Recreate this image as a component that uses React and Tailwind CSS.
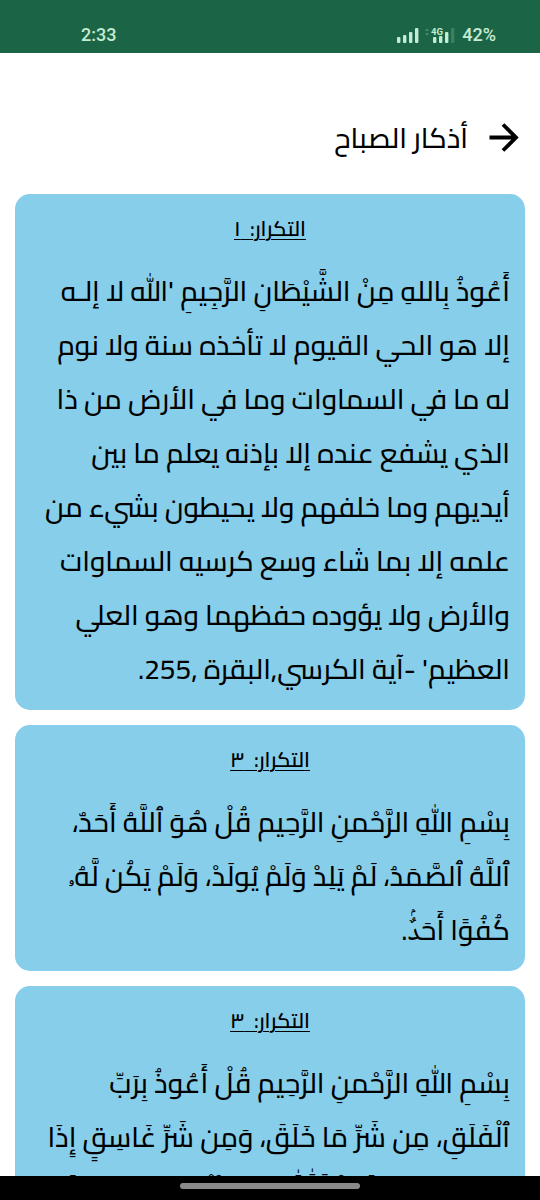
const adhkar = [
  {
    count: "١",
    text: "أَعُوذُ بِاللهِ مِنْ الشَّيْطَانِ الرَّجِيمِ 'الله لا إلـه إلا هو الحي القيوم لا تأخذه سنة ولا نوم له ما في السماوات وما في الأرض من ذا الذي يشفع عنده إلا بإذنه يعلم ما بين أيديهم وما خلفهم ولا يحيطون بشيء من علمه إلا بما شاء وسع كرسيه السماوات والأرض ولا يؤوده حفظهما وهو العلي العظيم' -آية الكرسي,البقرة ,255.",
  },
  {
    count: "٣",
    text: "بِسْمِ اللهِ الرَّحْمنِ الرَّحِيم قُلْ هُوَ ٱللَّهُ أَحَدٌ، ٱللَّهُ ٱلصَّمَدُ، لَمْ يَلِدْ وَلَمْ يُولَدْ، وَلَمْ يَكُن لَّهُۥ كُفُوًا أَحَدٌۢ.",
  },
  {
    count: "٣",
    text: "بِسْمِ اللهِ الرَّحْمنِ الرَّحِيم قُلْ أَعُوذُ بِرَبِّ ٱلْفَلَقِ، مِن شَرِّ مَا خَلَقَ، وَمِن شَرِّ غَاسِقٍ إِذَا وَقَبَ، وَمِن شَرِّ ٱلنَّفَّٰثَٰتِ فِى ٱلْعُقَدِ، وَمِن شَرِّ حَاسِدٍ إِذَا حَسَدَ.",
  },
];

function StatusBar() {
  return (
    <div
      dir="ltr"
      className="flex h-[53px] shrink-0 items-end justify-between bg-[#1c6446] pr-11 pb-2 pl-[81px] font-['Roboto',sans-serif] text-[18px] leading-5 text-[#c4ecd2]"
    >
      <span>2:33</span>
      <div className="flex items-center gap-1.5">
        <svg width="60" height="20" viewBox="0 0 60 20" fill="currentColor" aria-label="4G">
          <rect x="1" y="12" width="3.4" height="6" rx="1" />
          <rect x="7" y="10" width="3.4" height="8" rx="1" />
          <rect x="13" y="7" width="3.4" height="11" rx="1" />
          <rect x="19" y="3" width="3.4" height="15" rx="1" />
          <path d="M29 6l2-3 2 3zM29 8l2 3 2-3z" opacity="0.25" />
          <text x="35" y="9.5" fontSize="9.5" fontWeight="700">4G</text>
          <rect x="37" y="12" width="3.4" height="6" rx="1" />
          <rect x="43" y="11" width="3.4" height="7" rx="1" />
          <rect x="49" y="7" width="3.4" height="11" rx="1" />
          <rect x="55" y="3" width="3.4" height="15" rx="1" opacity="0.2" />
        </svg>
        <span>42%</span>
      </div>
    </div>
  );
}

function DhikrCard({ count, text }) {
  return (
    <article className="rounded-[15px] bg-[#87ceeb] px-[15px] pt-[14px] pb-[14px]">
      <h2 className="mb-[15px] text-center text-[21px] leading-[41px] font-semibold whitespace-pre underline decoration-1 underline-offset-3">
        {"التكرار:  " + count}
      </h2>
      <p>{text}</p>
    </article>
  );
}

export default function App() {
  return (
    <div
      dir="rtl"
      lang="ar"
      className="flex h-screen flex-col bg-white font-['Cairo','Noto_Naskh_Arabic',sans-serif] text-[28px] leading-[54px] font-medium text-black"
    >
      <StatusBar />
      <header className="flex h-[141px] shrink-0 items-center gap-[17px] px-[15px] pt-[29px]">
        <button type="button" aria-label="رجوع" className="flex size-10 items-center justify-center">
          <svg width="40" height="40" viewBox="0 0 40 40" fill="none" stroke="currentColor" strokeWidth="3.8">
            <path d="M4.5 19.5H31M18 6.5L31 19.5L18 32.5" />
          </svg>
        </button>
        <h1>أذكار الصباح</h1>
      </header>
      <main className="flex min-h-0 flex-1 flex-col gap-[15px] overflow-hidden px-[15px]">
        {adhkar.map((item, i) => (
          <DhikrCard key={i} count={item.count} text={item.text} />
        ))}
      </main>
      <footer className="flex h-6 shrink-0 justify-center bg-black pt-[7px]">
        <div className="h-[6px] w-1/3 rounded-full bg-[#8a8a8a]" />
      </footer>
    </div>
  );
}
